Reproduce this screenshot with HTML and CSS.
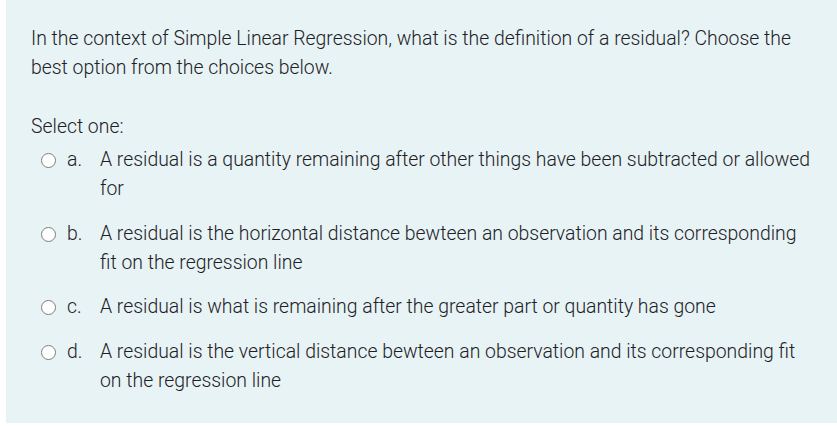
FILE: index.html
```html
<!DOCTYPE html>
<html>
<head>
<meta charset="utf-8">
<link rel="stylesheet" href="styles.css">
</head>
<body>
<div class="formulation">
  <div class="qtext">In the context of Simple Linear Regression, what is the definition of a residual? Choose the best option from the choices below.</div>
  <div class="ablock">
    <div class="prompt">Select one:</div>
    <div class="answer">
      <div class="opt">
        <span class="radio"></span>
        <span class="letter">a.</span>
        <span class="label">A residual is a quantity remaining after other things have been subtracted or allowed for</span>
      </div>
      <div class="opt">
        <span class="radio"></span>
        <span class="letter">b.</span>
        <span class="label">A residual is the horizontal distance bewteen an observation and its corresponding fit on the regression line</span>
      </div>
      <div class="opt">
        <span class="radio"></span>
        <span class="letter">c.</span>
        <span class="label">A residual is what is remaining after the greater part or quantity has gone</span>
      </div>
      <div class="opt">
        <span class="radio"></span>
        <span class="letter">d.</span>
        <span class="label">A residual is the vertical distance bewteen an observation and its corresponding fit on the regression line</span>
      </div>
    </div>
  </div>
</div>
</body>
</html>
```
FILE: styles.css
```css
html, body {
  margin: 0;
  padding: 0;
  background: #ffffff;
}
body {
  font-family: Roboto, "Liberation Sans", sans-serif;
  font-weight: 300;
  font-size: 19.4px;
  line-height: 29px;
  color: #1d2125;
}
.formulation {
  margin: 0 0 3px 6px;
  height: 423px;
  box-sizing: border-box;
  background: #e7f3f5;
  padding: 24px 24px 0 25px;
}
.qtext {
  margin-bottom: 30px;
}
.prompt {
  margin-bottom: 4px;
}
.answer {
  padding-left: 10px;
}
.opt {
  display: flex;
  align-items: flex-start;
  margin-bottom: 15.5px;
}
.radio {
  flex: none;
  width: 15px;
  height: 15px;
  box-sizing: border-box;
  border: 1px solid #7d7d7d;
  border-radius: 50%;
  background: #ffffff;
  margin-top: 8px;
  margin-right: 11px;
}
.letter {
  flex: none;
  width: 33px;
}
.label {
  flex: 1;
}
```
